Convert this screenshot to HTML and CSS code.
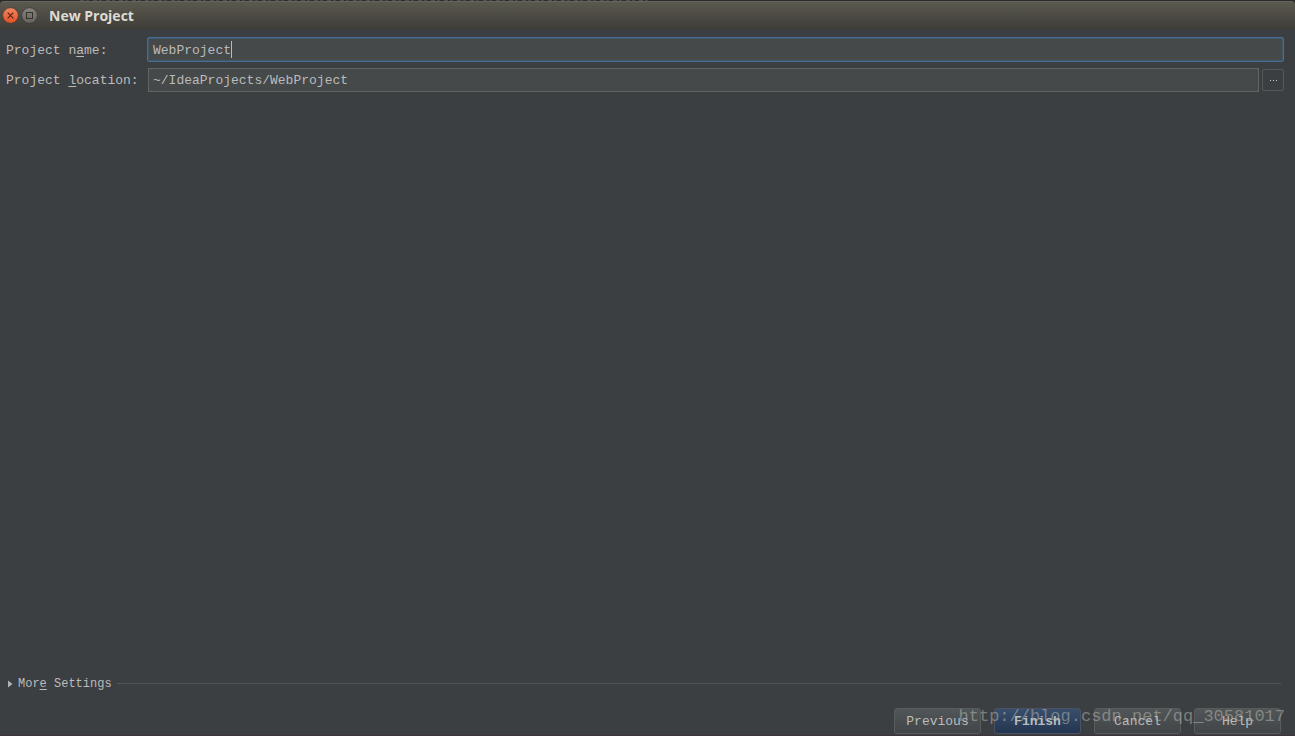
FILE: index.html
```html
<!DOCTYPE html>
<html lang="en">
<head>
<meta charset="utf-8">
<title>New Project</title>
<link rel="stylesheet" href="styles.css">
</head>
<body>
<div class="backdrop"></div>
<form class="dialog">
  <header class="titlebar">
    <button type="button" class="window-button" aria-label="Close">
      <svg width="17" height="17" viewBox="0 0 17 17">
        <defs><linearGradient id="close-fill" x1="0" y1="0" x2="0" y2="1"><stop offset="0" stop-color="#f58863"/><stop offset="1" stop-color="#e34f22"/></linearGradient></defs>
        <circle cx="8.5" cy="8.5" r="7.8" fill="url(#close-fill)" stroke="#4a3a32" stroke-width=".7"/>
        <path d="M5.7 5.7l5.6 5.6M11.3 5.7l-5.6 5.6" stroke="#51281b" stroke-width="1.2"/>
      </svg>
    </button>
    <button type="button" class="window-button" aria-label="Maximize">
      <svg width="17" height="17" viewBox="0 0 17 17">
        <defs><linearGradient id="max-fill" x1="0" y1="0" x2="0" y2="1"><stop offset="0" stop-color="#85837b"/><stop offset="1" stop-color="#65635c"/></linearGradient></defs>
        <circle cx="8.5" cy="8.5" r="7.8" fill="url(#max-fill)" stroke="#3b3934" stroke-width=".7"/>
        <rect x="5.5" y="5.5" width="6" height="6" fill="none" stroke="#34322d"/>
      </svg>
    </button>
    <h1 class="title">New Project</h1>
  </header>
  <main class="content">
    <div class="fields">
      <label class="label" for="name">Project n<u>a</u>me:</label>
      <div class="field focused">
        <input class="input" id="name" type="text" value="WebProject">
        <span class="caret"></span>
      </div>
      <label class="label" for="location">Project <u>l</u>ocation:</label>
      <div class="location">
        <input class="input bordered" id="location" type="text" value="~/IdeaProjects/WebProject">
        <button type="button" class="browse" aria-label="Browse">
          <svg width="8" height="2" viewBox="0 0 8 2" fill="#ccc"><path d="M1 1h1v1H1zM4 1h1v1H4zM7 1h1v1H7z"/></svg>
        </button>
      </div>
    </div>
    <button type="button" class="more">
      <svg width="5" height="8" viewBox="0 0 5 8"><path d="M0 0.5l4.5 3.5L0 7.5z" fill="#b0b2b3"/></svg>
      <span>Mor<u>e</u> Settings</span>
      <span class="rule"></span>
    </button>
  </main>
  <footer class="actions">
    <button type="button" class="button">Previous</button>
    <button type="submit" class="button primary">Finish</button>
    <button type="button" class="button">Cancel</button>
    <button type="button" class="button">Help</button>
    <span class="watermark">http://blog.csdn.net/qq_30581017</span>
  </footer>
</form>
</body>
</html>
```
FILE: styles.css
```css
* {
  box-sizing: border-box;
}

body {
  margin: 0;
  min-height: 100vh;
  display: flex;
  flex-direction: column;
  overflow: hidden;
  background: #2b2b2b;
  color: #bbbbbb;
  font: 13px/16px "Liberation Mono", monospace;
}

button,
input {
  margin: 0;
  padding: 0;
  border: 0;
  background: none;
  color: inherit;
  font: inherit;
  outline: none;
}

svg {
  display: block;
}

u {
  text-underline-offset: 2px;
  text-decoration-thickness: 1px;
}

.backdrop {
  height: 1px;
  margin: 0 50% 0 80px;
  background: repeating-linear-gradient(90deg, #4c5054 0 4px, #2b2b2b 4px 6px, #44484d 6px 9px, #2b2b2b 9px 13px);
}

.dialog {
  flex: 1;
  display: flex;
  flex-direction: column;
  border-bottom: 1px solid #3b343a;
  border-radius: 4px 4px 0 0;
  background: #3c3f41;
  overflow: hidden;
}

.titlebar {
  height: 28px;
  display: flex;
  align-items: center;
  gap: 2px;
  padding: 0 2px;
  border-top: 1px solid #67655a;
  background: linear-gradient(#5b594f, #3e3d38);
}

.window-button {
  width: 17px;
  height: 17px;
}

.title {
  margin: 0 0 0 9px;
  color: #dfdbd2;
  font: bold 14px/20px "Open Sans", sans-serif;
}

.content {
  flex: 1;
  display: flex;
  flex-direction: column;
  justify-content: space-between;
  padding: 8px 11px 16px 6px;
}

.fields {
  display: grid;
  grid-template-columns: 135px 1fr;
  align-items: center;
  column-gap: 6px;
  row-gap: 6px;
}

.label {
  padding-top: 2px;
  white-space: nowrap;
}

.field {
  position: relative;
}

.input {
  width: 100%;
  height: 25px;
  padding: 1px 4px 0;
  border: 1px solid #466d94;
  border-radius: 2px;
  background: #45494a;
}

.focused .input {
  box-shadow: inset 0 0 0 1px #41576a;
  padding: 2px 5px 0;
}

.caret {
  position: absolute;
  top: 4px;
  left: calc(6px + 10ch);
  width: 1px;
  height: 17px;
  background: #bbbbbb;
}

.location {
  display: flex;
  align-items: center;
  gap: 3px;
  padding-left: 1px;
}

.bordered {
  flex: 1;
  height: 24px;
  border-color: #646464;
  border-radius: 0;
}

.browse {
  width: 22px;
  height: 22px;
  display: grid;
  place-items: center;
  border: 1px solid #55595b;
  border-radius: 2px;
}

.more {
  display: flex;
  align-items: center;
  gap: 5px;
  margin-right: 3px;
  padding-left: 2px;
  font-size: 12px;
}

.rule {
  flex: 1;
  height: 2px;
  border-top: 1px solid #515556;
}

.actions {
  position: relative;
  display: flex;
  justify-content: flex-end;
  gap: 13px;
  padding: 0 14px 1px;
}

.button {
  width: 87px;
  height: 26px;
  padding-top: 2px;
  border: 1px solid #585c5d;
  border-radius: 3px;
  background: linear-gradient(#515658, #414547);
}

.primary {
  border-color: #4a5365;
  background: linear-gradient(#384f6b, #233450);
  font-weight: bold;
}

.watermark {
  position: absolute;
  right: 10px;
  top: -3px;
  color: rgba(190, 190, 180, 0.5);
  font-size: 17px;
  line-height: 24px;
  pointer-events: none;
}
```
